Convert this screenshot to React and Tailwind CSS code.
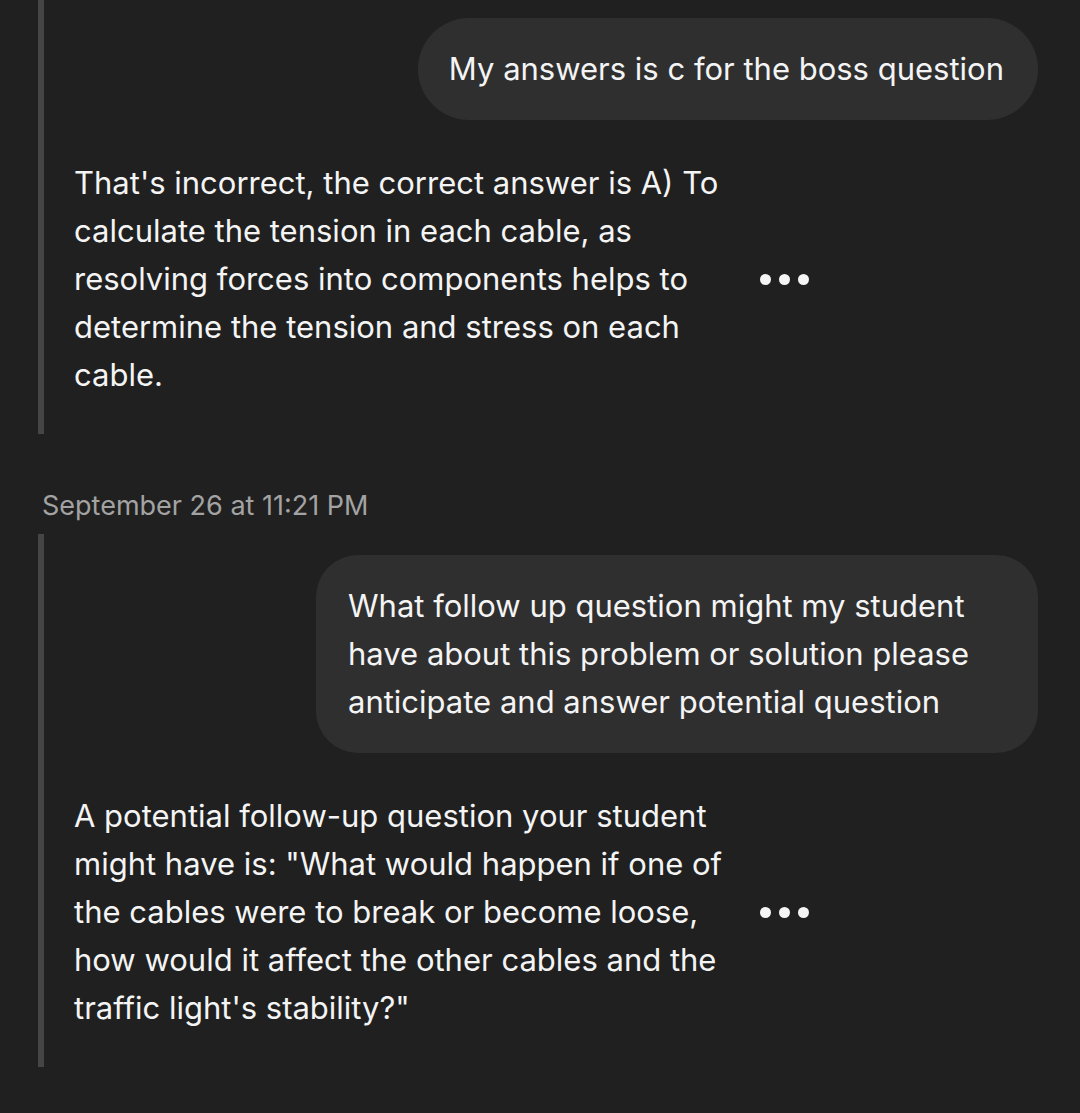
import React from 'react';

const font = { fontFamily: 'Inter, "Noto Sans", sans-serif' };

const Dots = () => (
  <div className="flex items-center gap-[8px]">
    {[0, 1, 2].map(i => <span key={i} className="w-[11px] h-[11px] rounded-full bg-[#f5f5f5]" />)}
  </div>
);

const UserBubble = ({ lines, className }) => (
  <div className="flex justify-end pr-[42px]">
    <div className={`bg-[#2f2f2f] text-[#f4f4f4] ${className}`}>
      {lines.map(l => <div key={l} className="h-[48px] leading-[48px] whitespace-nowrap">{l}</div>)}
    </div>
  </div>
);

const BotMessage = ({ lines }) => (
  <div className="flex items-center pl-[30px]">
    <div className="w-[686px] text-[#f4f4f4]">
      {lines.map(l => <div key={l} className="h-[48px] leading-[48px] whitespace-nowrap">{l}</div>)}
    </div>
    <Dots />
  </div>
);

export default function App() {
  return (
    <div className="w-[1080px] h-[1113px] bg-[#202020] overflow-hidden text-[31px]" style={font}>
      {/* first exchange */}
      <div className="ml-[38px] border-l-[6px] border-[#454545] pt-[18px] pb-[35px]">
        <UserBubble lines={['My answers is c for the boss question']} className="rounded-[52px] pl-[31px] pr-[34px] py-[27px]" />
        <div className="mt-[39px]">
          <BotMessage lines={[
            "That's incorrect, the correct answer is A) To",
            'calculate the tension in each cable, as',
            'resolving forces into components helps to',
            'determine the tension and stress on each',
            'cable.',
          ]} />
        </div>
      </div>

      <div className="pl-[42px] pt-[56px] pb-[12px] text-[27px] leading-[32px] text-[#a3a3a3]">
        September 26 at 11:21 PM
      </div>

      {/* second exchange */}
      <div className="ml-[38px] border-l-[6px] border-[#454545] pt-[21px] pb-[35px]">
        <UserBubble lines={[
          'What follow up question might my student',
          'have about this problem or solution please',
          'anticipate and answer potential question',
        ]} className="rounded-[42px] w-[722px] pl-[32px] py-[27px]" />
        <div className="mt-[39px]">
          <BotMessage lines={[
            'A potential follow-up question your student',
            'might have is: "What would happen if one of',
            'the cables were to break or become loose,',
            'how would it affect the other cables and the',
            'traffic light\'s stability?"',
          ]} />
        </div>
      </div>
    </div>
  );
}
